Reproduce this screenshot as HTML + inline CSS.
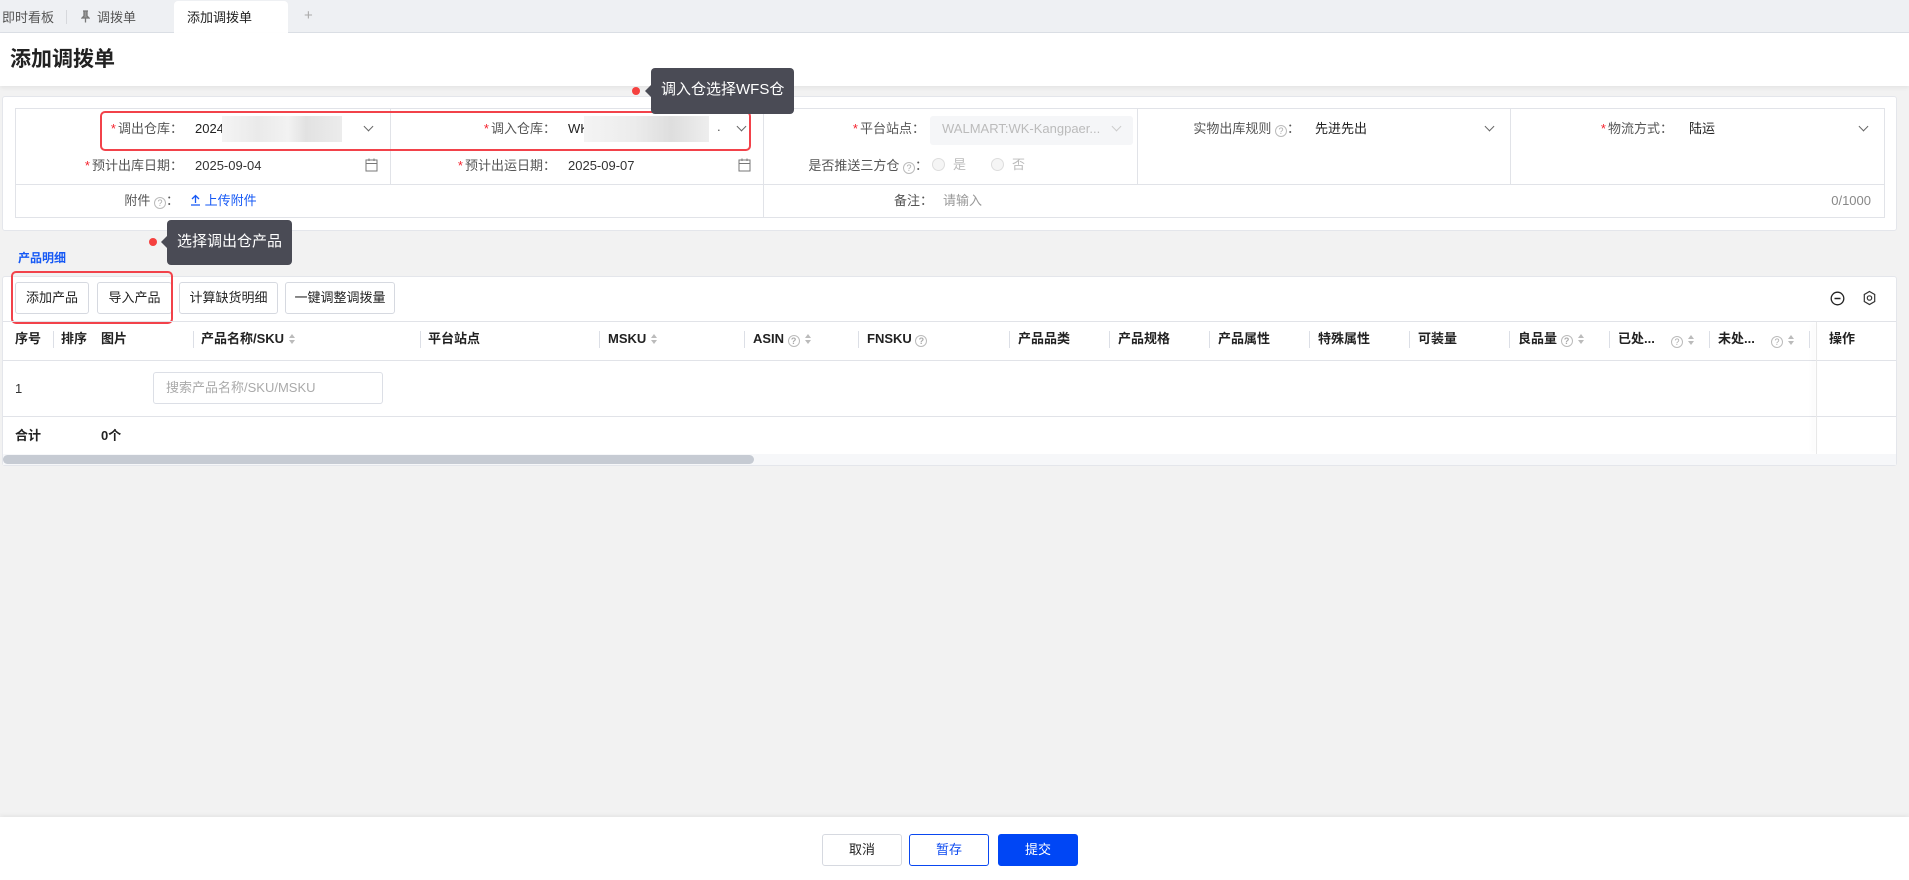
<!DOCTYPE html>
<html><head><meta charset="utf-8">
<style>
*{margin:0;padding:0;box-sizing:border-box}
body{width:1909px;height:880px;background:#f2f2f2;font-family:"Liberation Sans","Noto Sans CJK SC",sans-serif;font-size:13px;line-height:15px;color:#333;position:relative;overflow:hidden}
.a{position:absolute;white-space:nowrap}
.tabs{left:0;top:0;width:1909px;height:33px;background:#eef0f3;border-bottom:1px solid #dcdfe6}
.hdr{left:0;top:33px;width:1909px;height:53px;background:#fff;box-shadow:0 2px 4px rgba(0,0,0,.06)}
.card{background:#fff;border:1px solid #e4e6eb;border-radius:3px}
.req{color:#f5222d;margin-right:2px}
.lbl{color:#555;text-align:right}
.arr{width:7px;height:7px;border-right:1.3px solid #666;border-bottom:1.3px solid #666;transform:rotate(45deg)}
.q{display:inline-block;width:12px;height:12px;border:1px solid #bbb;border-radius:50%;font-size:9px;line-height:10px;text-align:center;color:#aaa;vertical-align:-1px}
.vl{background:#e1e3e8}
.btn{height:32px;border:1px solid #d6d9e0;border-radius:3px;background:#fff;text-align:center;line-height:30px;color:#222}
.th{font-weight:bold;color:#222;top:331px}
.dv{top:331px;width:1px;height:17px;background:#dcdfe6}
.sort{display:inline-block;vertical-align:-2px;margin-left:4px}
.tip{background:#4a4b55;color:#fff;border-radius:4px;font-size:15px;line-height:44px;padding:0 10px}
.dot{width:8px;height:8px;border-radius:50%;background:#f5413f}
.redbox{border:2.5px solid #f2424a;border-radius:5px}
</style></head><body>
<div class="a tabs"></div>
<div class="a" style="left:2px;top:10px;color:#555">即时看板</div>
<div class="a" style="left:66px;top:10px;width:1px;height:14px;background:#d6d8dc"></div>
<svg class="a" style="left:81px;top:10px" width="9" height="13" viewBox="0 0 9 13"><path d="M2 1H7M3 1V6L1 8H8L6 6V1M4.5 8V12.5" stroke="#777" stroke-width="1.3" fill="#999"/></svg>
<div class="a" style="left:97px;top:10px;color:#555">调拨单</div>
<div class="a" style="left:174px;top:1px;width:114px;height:33px;background:#fff;border-radius:4px 4px 0 0"></div>
<div class="a" style="left:187px;top:10px;color:#222">添加调拨单</div>
<div class="a" style="left:304px;top:8px;color:#aaa;font-size:15px">+</div>

<div class="a hdr"></div>
<div class="a" style="left:10px;top:48px;font-size:21px;line-height:24px;font-weight:bold;color:#222">添加调拨单</div>

<!-- form card -->
<div class="a card" style="left:2px;top:96px;width:1895px;height:135px"></div>
<div class="a" style="left:15px;top:108px;width:1870px;height:110px;border:1px solid #e1e3e8"></div>
<div class="a vl" style="left:15px;top:184px;width:1870px;height:1px"></div>
<div class="a vl" style="left:390px;top:108px;width:1px;height:76px"></div>
<div class="a vl" style="left:763px;top:108px;width:1px;height:110px"></div>
<div class="a vl" style="left:1137px;top:108px;width:1px;height:76px"></div>
<div class="a vl" style="left:1510px;top:108px;width:1px;height:76px"></div>

<div class="a lbl" style="right:1726px;top:121px"><span class="req">*</span>调出仓库：</div>
<div class="a" style="left:195px;top:121px;color:#222">2024</div>
<div class="a" style="left:222px;top:116px;width:120px;height:26px;background:linear-gradient(90deg,#f4f4f4,#eaeaea 30%,#f2f2f2 55%,#e2e2e2 70%,#ececec)"></div>
<div class="a arr" style="left:365px;top:123px"></div>
<div class="a lbl" style="right:1353px;top:121px"><span class="req">*</span>调入仓库：</div>
<div class="a" style="left:568px;top:121px;color:#222">WK</div>
<div class="a" style="left:584px;top:116px;width:125px;height:26px;background:linear-gradient(90deg,#f4f4f4,#ececec 40%,#dedede 70%,#eeeeee)"></div>
<div class="a" style="left:717px;top:119px;color:#555">.</div>
<div class="a arr" style="left:738px;top:123px"></div>

<div class="a lbl" style="right:1726px;top:158px"><span class="req">*</span>预计出库日期：</div>
<div class="a" style="left:195px;top:158px;color:#333">2025-09-04</div>
<svg class="a" style="left:365px;top:158px" width="13" height="14" viewBox="0 0 13 14"><rect x="1" y="2" width="11" height="11" fill="none" stroke="#777"/><path d="M1 5.5H12M4 0.5V3M9 0.5V3" stroke="#777"/></svg>
<div class="a lbl" style="right:1353px;top:158px"><span class="req">*</span>预计出运日期：</div>
<div class="a" style="left:568px;top:158px;color:#333">2025-09-07</div>
<svg class="a" style="left:738px;top:158px" width="13" height="14" viewBox="0 0 13 14"><rect x="1" y="2" width="11" height="11" fill="none" stroke="#777"/><path d="M1 5.5H12M4 0.5V3M9 0.5V3" stroke="#777"/></svg>

<div class="a lbl" style="right:984px;top:121px"><span class="req">*</span>平台站点：</div>
<div class="a" style="left:930px;top:116px;width:203px;height:29px;background:#f5f6f8;border-radius:3px"></div>
<div class="a" style="left:942px;top:121px;color:#bbb">WALMART:WK-Kangpaer...</div>
<div class="a arr" style="left:1113px;top:123px;border-color:#ccc"></div>
<div class="a lbl" style="right:981px;top:158px">是否推送三方仓 <span class="q">?</span>：</div>
<div class="a" style="left:932px;top:158px;width:13px;height:13px;border:1px solid #ddd;border-radius:50%;background:#f5f5f5"></div>
<div class="a" style="left:953px;top:157px;color:#bbb">是</div>
<div class="a" style="left:991px;top:158px;width:13px;height:13px;border:1px solid #ddd;border-radius:50%;background:#f5f5f5"></div>
<div class="a" style="left:1012px;top:157px;color:#bbb">否</div>

<div class="a lbl" style="right:609px;top:121px">实物出库规则 <span class="q">?</span>：</div>
<div class="a" style="left:1315px;top:121px;color:#222">先进先出</div>
<div class="a arr" style="left:1486px;top:123px"></div>
<div class="a lbl" style="right:236px;top:121px"><span class="req">*</span>物流方式：</div>
<div class="a" style="left:1689px;top:121px;color:#222">陆运</div>
<div class="a arr" style="left:1860px;top:123px"></div>

<div class="a lbl" style="right:1730px;top:193px">附件 <span class="q">?</span>：</div>
<div class="a" style="left:190px;top:193px;color:#1659f5">
<svg width="11" height="12" viewBox="0 0 11 12" style="vertical-align:-1px"><path d="M5.5 9V1.5M2 5L5.5 1.5 9 5M1 11H10" stroke="#1659f5" stroke-width="1.3" fill="none"/></svg> 上传附件</div>
<div class="a lbl" style="right:976px;top:193px">备注：</div>
<div class="a" style="left:943px;top:193px;color:#999">请输入</div>
<div class="a" style="right:38px;top:193px;color:#888">0/1000</div>

<div class="a redbox" style="left:100px;top:111px;width:651px;height:40px"></div>

<!-- tooltip 1 -->
<div class="a dot" style="left:632px;top:87px"></div>
<div class="a" style="left:645px;top:84px;width:0;height:0;border:7px solid transparent;border-right-color:#4a4b55;border-left:0"></div>
<div class="a tip" style="left:651px;top:68px;height:46px">调入仓选择WFS仓</div>

<!-- product detail label -->
<div class="a" style="left:18px;top:251px;color:#1659f5;font-size:12px;font-weight:bold">产品明细</div>
<div class="a dot" style="left:149px;top:238px"></div>
<div class="a" style="left:161px;top:235px;width:0;height:0;border:7px solid transparent;border-right-color:#4a4b55;border-left:0"></div>
<div class="a tip" style="left:167px;top:220px;height:45px">选择调出仓产品</div>

<!-- table card -->
<div class="a card" style="left:2px;top:276px;width:1895px;height:190px"></div>
<div class="a btn" style="left:15px;top:282px;width:74px">添加产品</div>
<div class="a btn" style="left:97px;top:282px;width:75px">导入产品</div>
<div class="a btn" style="left:179px;top:282px;width:99px">计算缺货明细</div>
<div class="a btn" style="left:285px;top:282px;width:110px">一键调整调拨量</div>
<div class="a redbox" style="left:11px;top:271px;width:162px;height:53px"></div>
<svg class="a" style="left:1830px;top:291px" width="15" height="15" viewBox="0 0 15 15"><circle cx="7.5" cy="7.5" r="6.3" fill="none" stroke="#222" stroke-width="1.3"/><path d="M4.5 7.5H10.5" stroke="#222" stroke-width="1.5"/></svg>
<svg class="a" style="left:1862px;top:290px" width="15" height="16" viewBox="0 0 15 16"><path d="M7.5 1.5L12.7 4.5V11.5L7.5 14.5 2.3 11.5V4.5Z" fill="none" stroke="#333" stroke-width="1.2"/><circle cx="7.5" cy="8" r="2.2" fill="none" stroke="#333" stroke-width="1.2"/></svg>

<div class="a vl" style="left:3px;top:321px;width:1893px;height:1px"></div>
<div class="a vl" style="left:3px;top:360px;width:1893px;height:1px"></div>
<div class="a vl" style="left:3px;top:416px;width:1893px;height:1px"></div>
<div class="a" style="left:1816px;top:322px;width:1px;height:132px;background:#e8e8e8;box-shadow:-3px 0 5px rgba(0,0,0,.08)"></div>

<div class="a th" style="left:15px">序号</div>
<div class="a dv" style="left:53px"></div>
<div class="a th" style="left:61px">排序</div>
<div class="a th" style="left:101px">图片</div>
<div class="a dv" style="left:193px"></div>
<div class="a th" style="left:201px">产品名称/SKU<svg class="sort" width="8" height="12"><path d="M4 1L7 5H1Z M4 11L7 7H1Z" fill="#bbb"/></svg></div>
<div class="a dv" style="left:420px"></div>
<div class="a th" style="left:428px">平台站点</div>
<div class="a dv" style="left:599px"></div>
<div class="a th" style="left:608px">MSKU<svg class="sort" width="8" height="12"><path d="M4 1L7 5H1Z M4 11L7 7H1Z" fill="#bbb"/></svg></div>
<div class="a dv" style="left:744px"></div>
<div class="a th" style="left:753px">ASIN <span class="q">?</span><svg class="sort" width="8" height="12"><path d="M4 1L7 5H1Z M4 11L7 7H1Z" fill="#bbb"/></svg></div>
<div class="a dv" style="left:858px"></div>
<div class="a th" style="left:867px">FNSKU <span class="q">?</span></div>
<div class="a dv" style="left:1009px"></div>
<div class="a th" style="left:1018px">产品品类</div>
<div class="a dv" style="left:1109px"></div>
<div class="a th" style="left:1118px">产品规格</div>
<div class="a dv" style="left:1209px"></div>
<div class="a th" style="left:1218px">产品属性</div>
<div class="a dv" style="left:1309px"></div>
<div class="a th" style="left:1318px">特殊属性</div>
<div class="a dv" style="left:1409px"></div>
<div class="a th" style="left:1418px">可装量</div>
<div class="a dv" style="left:1509px"></div>
<div class="a th" style="left:1518px">良品量 <span class="q">?</span><svg class="sort" width="8" height="12"><path d="M4 1L7 5H1Z M4 11L7 7H1Z" fill="#bbb"/></svg></div>
<div class="a dv" style="left:1609px"></div>
<div class="a th" style="left:1618px">已处...</div>
<div class="a" style="left:1671px;top:332px"><span class="q">?</span><svg class="sort" width="8" height="12"><path d="M4 1L7 5H1Z M4 11L7 7H1Z" fill="#bbb"/></svg></div>
<div class="a dv" style="left:1709px"></div>
<div class="a th" style="left:1718px">未处...</div>
<div class="a" style="left:1771px;top:332px"><span class="q">?</span><svg class="sort" width="8" height="12"><path d="M4 1L7 5H1Z M4 11L7 7H1Z" fill="#bbb"/></svg></div>
<div class="a dv" style="left:1809px"></div>
<div class="a th" style="left:1829px">操作</div>

<div class="a" style="left:15px;top:381px">1</div>
<div class="a" style="left:153px;top:372px;width:230px;height:32px;border:1px solid #dcdfe6;border-radius:3px;color:#aaa;line-height:30px;padding-left:12px">搜索产品名称/SKU/MSKU</div>
<div class="a" style="left:15px;top:428px;font-weight:bold;color:#222">合计</div>
<div class="a" style="left:101px;top:428px;font-weight:bold;color:#222">0个</div>

<div class="a" style="left:3px;top:454px;width:1893px;height:11px;background:#f6f7f9"></div>
<div class="a" style="left:3px;top:455px;width:751px;height:9px;background:#c6cbd3;border-radius:5px"></div>

<!-- footer -->
<div class="a" style="left:0;top:817px;width:1909px;height:63px;background:#fff;box-shadow:0 -2px 4px rgba(0,0,0,.05)"></div>
<div class="a btn" style="left:822px;top:834px;width:80px;color:#222">取消</div>
<div class="a btn" style="left:909px;top:834px;width:80px;border-color:#0a48f0;color:#0a48f0">暂存</div>
<div class="a btn" style="left:998px;top:834px;width:80px;border-color:#0046f5;background:#0046f5;color:#fff">提交</div>
</body></html>
